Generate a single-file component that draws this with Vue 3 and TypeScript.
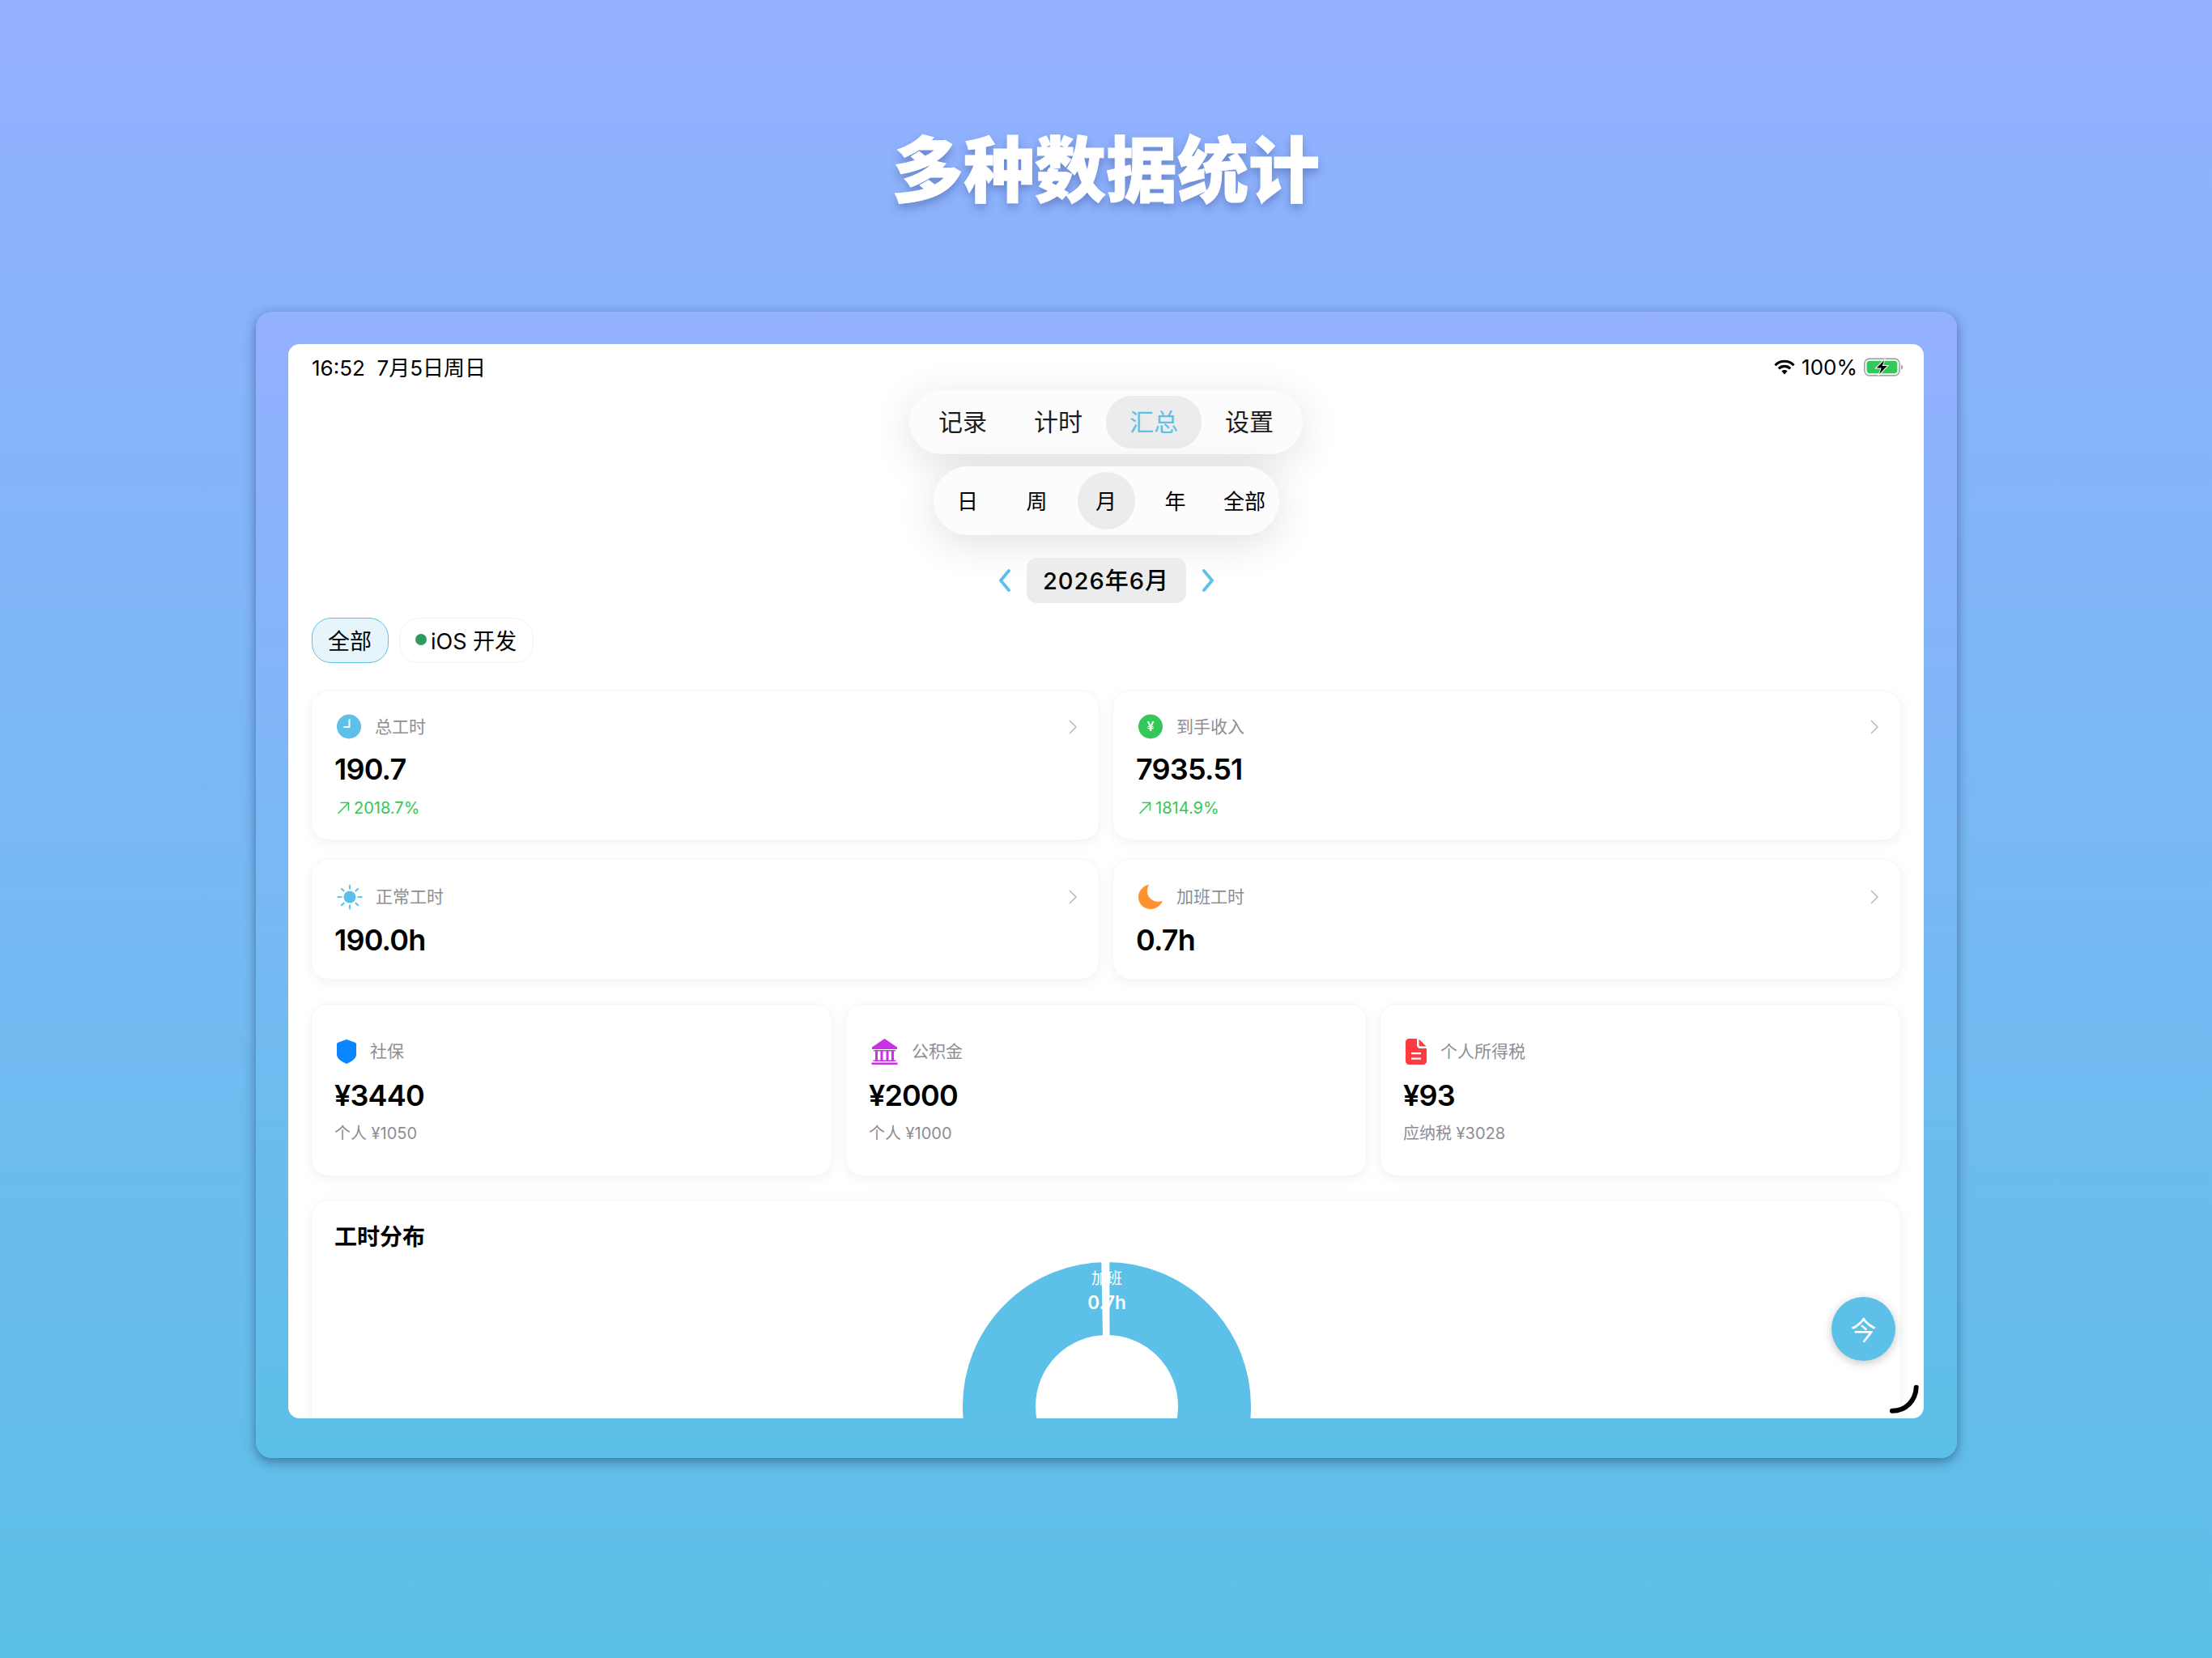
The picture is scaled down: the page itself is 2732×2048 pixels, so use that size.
<script setup lang="ts">
interface StatCard {
  label: string
  value: string
  icon: string
  delta?: string
}

interface MoneyCard {
  label: string
  value: string
  sub: string
  icon: string
}

const tabs = ["记录", "计时", "汇总", "设置"]
const ranges = ["日", "周", "月", "年", "全部"]

const topCards: StatCard[] = [
  { label: "总工时", value: "190.7", icon: "clock", delta: "2018.7%" },
  { label: "到手收入", value: "7935.51", icon: "yen", delta: "1814.9%" },
]

const hourCards: StatCard[] = [
  { label: "正常工时", value: "190.0h", icon: "sun" },
  { label: "加班工时", value: "0.7h", icon: "moon" },
]

const moneyCards: MoneyCard[] = [
  { label: "社保", value: "¥3440", sub: "个人 ¥1050", icon: "shield" },
  { label: "公积金", value: "¥2000", sub: "个人 ¥1000", icon: "bank" },
  { label: "个人所得税", value: "¥93", sub: "应纳税 ¥3028", icon: "doc" },
]

const sunRays = [0, 45, 90, 135, 180, 225, 270, 315]
</script>

<template>
  <div class="page">
    <h1 class="headline">多种数据统计</h1>

    <div class="frame">
      <div class="screen">
        <div class="status-bar">
          <span class="status-time">16:52&nbsp;&nbsp;7月5日周日</span>
          <div class="status-right">
            <svg width="26" height="19" viewBox="0 0 25 18" fill="none">
              <path d="M1.4 6.800A15.400 15.400 0 0 1 23.600 6.800" stroke="#000" stroke-width="3" />
              <path d="M5.600 10.800A9.800 9.800 0 0 1 19.400 10.800" stroke="#000" stroke-width="3" />
              <path d="M9 13.700A5 5 0 0 1 16 13.700L12.500 17.600Z" fill="#000" />
            </svg>
            <span>100%</span>
            <svg width="49" height="23" viewBox="0 0 48 22" fill="none">
              <rect x="0.800" y="0.800" width="42.400" height="20.400" rx="6" stroke="#a6a6a6" stroke-width="1.600" />
              <rect x="3.500" y="3.500" width="37" height="15" rx="3.500" fill="#34c759" />
              <path d="M45 8v6c1.400-.4 2.400-1.600 2.400-3S46.400 8.400 45 8Z" fill="#a6a6a6" />
              <path d="M26 0.500 14 12.500h6.500l-3 9 12-12.500H23Z" fill="#000" stroke="#fff" stroke-width="1" />
            </svg>
          </div>
        </div>

        <div class="nav-pill">
          <div v-for="tab in tabs" :key="tab" class="nav-item" :class="{ active: tab === '汇总' }">{{ tab }}</div>
        </div>

        <div class="range-pill">
          <div v-for="r in ranges" :key="r" class="range-item" :class="{ active: r === '月' }">{{ r }}</div>
        </div>

        <div class="date-row">
          <svg width="16" height="28" viewBox="0 0 16 28" fill="none">
            <path d="M13 2 3 14l10 12" stroke="#5cc0e8" stroke-width="3.800" stroke-linecap="round" stroke-linejoin="round" />
          </svg>
          <div class="date-label">2026年6月</div>
          <svg width="16" height="28" viewBox="0 0 16 28" fill="none">
            <path d="m3 2 10 12L3 26" stroke="#5cc0e8" stroke-width="3.800" stroke-linecap="round" stroke-linejoin="round" />
          </svg>
        </div>

        <div class="chips">
          <div class="chip chip-active">全部</div>
          <div class="chip"><i class="dot"></i>iOS 开发</div>
        </div>

        <div class="two-col row-top">
          <div v-for="card in topCards" :key="card.label" class="card stat-top">
            <div class="card-head">
              <div class="head-left">
                <svg v-if="card.icon === 'clock'" class="ic" width="30" height="31" viewBox="0 0 30 31">
                  <circle cx="15" cy="15.500" r="15" fill="#5cc0e8" />
                  <path d="M15.500 6.500v9.500H8.500" fill="none" stroke="#fff" stroke-width="2" />
                </svg>
                <svg v-else class="ic" width="30" height="31" viewBox="0 0 30 31">
                  <circle cx="15" cy="15.500" r="15" fill="#34c759" />
                  <text x="15" y="21" text-anchor="middle" class="yen-glyph">¥</text>
                </svg>
                <span class="label">{{ card.label }}</span>
              </div>
              <svg width="10" height="18" viewBox="0 0 10 18" fill="none">
                <path d="m1 1 8 8-8 8" stroke="#b8b8bc" stroke-width="1.500" />
              </svg>
            </div>
            <div class="value">{{ card.value }}</div>
            <div class="delta">
              <svg width="16" height="16" viewBox="0 0 16 16" fill="none">
                <path d="M1.500 15 14.500 1.500M4.500 1.500h10v10" stroke="#34c759" stroke-width="1.500" />
              </svg>
              <span>{{ card.delta }}</span>
            </div>
          </div>
        </div>

        <div class="two-col row-hours">
          <div v-for="card in hourCards" :key="card.label" class="card stat-hours">
            <div class="card-head">
              <div class="head-left">
                <svg v-if="card.icon === 'sun'" class="ic ic-sun" width="32" height="32" viewBox="0 0 32 32">
                  <circle cx="16" cy="16" r="7.500" fill="#5cc0e8" />
                  <path
                    v-for="a in sunRays"
                    :key="a"
                    d="M16 1.500v4"
                    stroke="#5cc0e8"
                    stroke-width="2"
                    stroke-linecap="round"
                    :transform="`rotate(${a} 16 16)`"
                  />
                </svg>
                <svg v-else class="ic" width="30" height="31" viewBox="0 0 30 31">
                  <path
                    d="M13 0.500C5 2.500 0 9 0 16c0 8.500 6.800 15 15 15 6.500 0 12-4 15-10-10.500 3-19-3.500-19-11.500 0-3.200.7-6.200 2-9Z"
                    fill="#ff9230"
                  />
                </svg>
                <span class="label">{{ card.label }}</span>
              </div>
              <svg width="10" height="18" viewBox="0 0 10 18" fill="none">
                <path d="m1 1 8 8-8 8" stroke="#b8b8bc" stroke-width="1.500" />
              </svg>
            </div>
            <div class="value">{{ card.value }}</div>
          </div>
        </div>

        <div class="three-col">
          <div v-for="card in moneyCards" :key="card.label" class="card stat-money">
            <div class="card-head">
              <div class="head-left">
                <svg v-if="card.icon === 'shield'" class="ic" width="24" height="30" viewBox="0 0 24 30">
                  <path
                    d="M12 0 22 3.400C23.400 3.900 24 4.700 24 6v12.500c0 5.500-6.500 9.200-12 11.500C6.500 27.700 0 24 0 18.500V6c0-1.300.6-2.100 2-2.600Z"
                    fill="#0a84ff"
                  />
                </svg>
                <svg v-else-if="card.icon === 'bank'" class="ic" width="33" height="32" viewBox="0 0 33 32">
                  <path d="M16.500 0 32 10.500V13H1V10.500Z" fill="#c932e2" />
                  <path d="M3 14h27v1.500H3ZM0.500 29.500h32V32H0.500ZM2.500 26.500h28V28h-28Z" fill="#c932e2" />
                  <path d="M5 15h3v12H5ZM11.500 15h3v12h-3ZM18.500 15h3v12h-3ZM25 15h3v12h-3Z" fill="#c932e2" />
                </svg>
                <svg v-else class="ic" width="26" height="32" viewBox="0 0 26 32">
                  <path
                    d="M4 0h10v8c0 2.200 1.800 4 4 4h8v16c0 2.200-1.800 4-4 4H4c-2.200 0-4-1.800-4-4V4c0-2.200 1.800-4 4-4Z"
                    fill="#ff3b42"
                  />
                  <path d="M16.500 0.500 25.500 9.500h-7c-1.100 0-2-.9-2-2Z" fill="#ff3b42" />
                  <path d="M7 17h12v2.200H7ZM7 23.500h12v2.200H7Z" fill="#fff" />
                </svg>
                <span class="label">{{ card.label }}</span>
              </div>
            </div>
            <div class="value">{{ card.value }}</div>
            <div class="sub">{{ card.sub }}</div>
          </div>
        </div>

        <div class="card chart-card">
          <div class="chart-title">工时分布</div>
          <svg class="donut" width="360" height="360" viewBox="0 0 360 360">
            <circle cx="180" cy="180" r="133" fill="none" stroke="#5cc0e8" stroke-width="90" />
            <polygon points="173.300,0 183.300,0 183.500,93 175,93" fill="#fff" />
            <text x="180" y="29" text-anchor="middle" class="donut-name">加班</text>
            <text x="180" y="60" text-anchor="middle" class="donut-value">0.7h</text>
          </svg>
        </div>

        <div class="today-btn">今</div>
        <svg class="corner-arc" width="50" height="50" viewBox="0 0 50 50" fill="none">
          <path d="M40.700 11.700C40 28 28 40.700 11 40.700" stroke="#000" stroke-width="6" stroke-linecap="round" />
        </svg>
      </div>
    </div>
  </div>
</template>

<style>
body {
  margin: 0;
}
</style>

<style scoped>
.page {
  width: 2732px;
  height: 2048px;
  overflow: hidden;
  background: linear-gradient(180deg, #94b0ff 0%, #5cc0e8 100%);
  font-family: Inter, "Noto Sans CJK SC", sans-serif;
  color: #000;
}

.headline {
  margin: 0;
  height: 385px;
  box-sizing: border-box;
  padding-top: 140px;
  text-align: center;
  font-family: "Noto Sans CJK SC", sans-serif;
  font-size: 88px;
  line-height: 128px;
  font-weight: 900;
  color: #fff;
  -webkit-text-stroke: 1px #fff;
  text-shadow: 0 6px 12px rgba(30, 50, 110, 0.35);
}

.frame {
  width: 2101px;
  height: 1416px;
  margin-left: 316px;
  box-sizing: border-box;
  padding: 40px 41px 49px 40px;
  border-radius: 20px;
  background: linear-gradient(180deg, #94b0ff 0%, #5cc0e8 100%);
  box-shadow: 0 4px 14px rgba(20, 40, 80, 0.5);
}

.screen {
  position: relative;
  height: 1327px;
  overflow: hidden;
  border-radius: 14px;
  background: #fff;
  display: flex;
  flex-direction: column;
}

.status-bar {
  flex: none;
  height: 57px;
  padding: 0 25px 0 29px;
  display: flex;
  justify-content: space-between;
  align-items: center;
  font-size: 25px;
}

.status-time {
  font-size: 26px;
  padding-bottom: 3px;
}

.status-right {
  display: flex;
  align-items: center;
  gap: 8px;
  font-size: 26px;
}

.nav-pill {
  flex: none;
  align-self: center;
  height: 79px;
  box-sizing: border-box;
  padding: 7px;
  display: flex;
  border-radius: 40px;
  background: #fcfcfc;
  box-shadow: 0 10px 50px rgba(0, 0, 0, 0.12);
  z-index: 1;
}

.nav-item {
  width: 118px;
  box-sizing: border-box;
  padding-bottom: 5px;
  border-radius: 32px;
  display: flex;
  align-items: center;
  justify-content: center;
  font-size: 30px;
  color: #1c1c1e;
}

.nav-item.active {
  background: #ececec;
  color: #5cc0e8;
}

.range-pill {
  flex: none;
  align-self: center;
  margin-top: 15px;
  height: 85px;
  box-sizing: border-box;
  padding: 7px;
  display: flex;
  gap: 14.5px;
  border-radius: 43px;
  background: #fcfcfc;
  box-shadow: 0 10px 50px rgba(0, 0, 0, 0.12);
  z-index: 1;
}

.range-item {
  width: 71px;
  box-sizing: border-box;
  padding-bottom: 3px;
  border-radius: 50%;
  display: flex;
  align-items: center;
  justify-content: center;
  font-size: 26px;
  color: #000;
}

.range-item.active {
  background: #ececec;
}

.date-row {
  flex: none;
  margin-top: 28px;
  display: flex;
  align-items: center;
  justify-content: center;
  gap: 19px;
  z-index: 1;
}

.date-label {
  width: 197px;
  height: 56px;
  box-sizing: border-box;
  padding-bottom: 5px;
  border-radius: 13px;
  background: #ececec;
  display: flex;
  align-items: center;
  justify-content: center;
  font-size: 29px;
  font-weight: 500;
  letter-spacing: 1px;
}

.chips {
  flex: none;
  margin: 18px 0 0 29px;
  display: flex;
  gap: 13px;
}

.chip {
  height: 56px;
  box-sizing: border-box;
  padding: 0 20px 2px 19px;
  display: flex;
  align-items: center;
  gap: 5px;
  border: 1px solid #f2f2f2;
  border-radius: 24px;
  background: #fff;
  font-size: 27px;
}

.chip-active {
  border-color: #5cc0e8;
  background: #e6f5fb;
}

.dot {
  width: 14px;
  height: 14px;
  border-radius: 50%;
  background: #2e9a5e;
}

.card {
  box-sizing: border-box;
  border: 1px solid #f6f6f6;
  border-radius: 22px;
  background: #fff;
  box-shadow: 0 4px 16px rgba(0, 0, 0, 0.05);
}

.two-col {
  flex: none;
  margin: 0 28px;
  display: grid;
  grid-template-columns: 1fr 1fr;
  gap: 16px;
}

.row-top {
  margin-top: 34px;
}

.row-hours {
  margin-top: 23px;
}

.three-col {
  flex: none;
  margin: 30px 28px 0;
  display: grid;
  grid-template-columns: repeat(3, 1fr);
  gap: 16px;
}

.stat-top {
  height: 185px;
  padding: 28px 27px 0 28px;
}

.stat-top .value {
  margin-top: 15px;
}

.stat-hours {
  height: 149px;
  padding: 30px 27px 0 28px;
}

.stat-money {
  height: 213px;
  padding: 42px 27px 0 28px;
}

.stat-money .value {
  margin-top: 17px;
}

.card-head {
  height: 31px;
  display: flex;
  justify-content: space-between;
  align-items: center;
}

.head-left {
  display: flex;
  align-items: center;
  gap: 17px;
}

.ic {
  margin-left: 3px;
  flex: none;
}

.ic-sun {
  margin-right: -1px;
}

.yen-glyph {
  font-family: Inter, sans-serif;
  font-size: 16px;
  font-weight: 600;
  fill: #fff;
}

.label {
  padding-bottom: 3px;
  font-size: 21px;
  color: #8e8e93;
}

.value {
  margin-top: 16px;
  font-size: 36px;
  line-height: 44px;
  font-weight: 600;
  letter-spacing: -0.8px;
}

.delta {
  margin-top: 13px;
  height: 26px;
  margin-left: 3px;
  display: flex;
  align-items: center;
  gap: 5px;
  font-size: 20px;
  color: #34c759;
}

.sub {
  margin-top: 12px;
  font-size: 20px;
  line-height: 26px;
  color: #8e8e93;
}

.chart-card {
  flex: none;
  margin: 29px 28px 0;
  height: 700px;
  padding: 28px 27px 0 28px;
}

.chart-title {
  font-size: 28px;
  line-height: 34px;
  font-weight: 600;
}

.donut {
  display: block;
  margin: 12px auto 0;
}

.donut-name {
  font-family: Inter, "Noto Sans CJK SC", sans-serif;
  font-size: 19px;
  fill: #fff;
}

.donut-value {
  font-family: Inter, sans-serif;
  font-size: 22.5px;
  font-weight: 600;
  fill: #fff;
}

.today-btn {
  position: absolute;
  right: 35px;
  top: 1177px;
  width: 79px;
  height: 79px;
  box-sizing: border-box;
  padding-bottom: 2px;
  border-radius: 50%;
  background: #5cc0e8;
  box-shadow: 0 3px 12px rgba(0, 0, 0, 0.22);
  display: flex;
  align-items: center;
  justify-content: center;
  font-size: 32px;
  color: #fff;
}

.corner-arc {
  position: absolute;
  right: 0;
  bottom: 0;
}
</style>
